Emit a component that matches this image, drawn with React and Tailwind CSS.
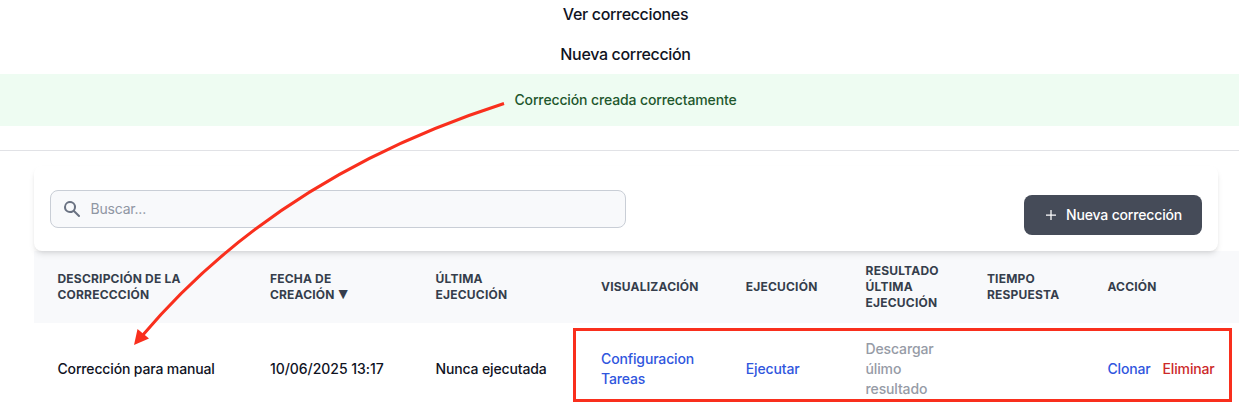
const columns = [
  { label: 'Descripción de la correccción', width: 'w-[212.4px]' },
  { label: 'Fecha de creación', width: 'w-[165.6px]', sorted: true },
  { label: 'Última ejecución', width: 'w-[165.5px]', narrow: true },
  { label: 'Visualización', width: 'w-[144.7px]' },
  { label: 'Ejecución', width: 'w-[119.8px]' },
  { label: 'Resultado última ejecución', width: 'w-[121.3px]' },
  { label: 'Tiempo respuesta', width: 'w-[120.5px]' },
  { label: 'Acción', width: 'w-[156px]' },
];

function SearchIcon() {
  return (
    <svg className="h-5 w-5 shrink-0 text-gray-500" viewBox="0 0 20 20" fill="currentColor">
      <path
        fillRule="evenodd"
        clipRule="evenodd"
        d="M8 4a4 4 0 100 8 4 4 0 000-8zM2 8a6 6 0 1110.89 3.476l4.817 4.817a1 1 0 01-1.414 1.414l-4.816-4.816A6 6 0 012 8z"
      />
    </svg>
  );
}

function Toolbar() {
  return (
    <div className="relative z-10 flex h-[85px] w-[1184px] items-start rounded-lg bg-white px-4 shadow-md">
      <div className="mt-[24px] flex h-[38px] w-[576px] items-center gap-[8.5px] rounded-lg border border-[#c9ced6] bg-[#f8f9fb] pl-[11px]">
        <SearchIcon />
        <span className="text-sm leading-5 tracking-[-0.2px] text-[#8f96a3]">Buscar...</span>
      </div>
      <button className="mt-[29px] ml-auto flex h-10 w-[178px] items-center rounded-lg bg-[#454b58] pl-[22px] text-sm font-medium tracking-[-0.16px] text-white">
        <svg className="mr-[10px] h-[10px] w-[10px]" viewBox="0 0 10 10" stroke="currentColor" strokeWidth="1.25">
          <path d="M5 0v10M0 5h10" />
        </svg>
        Nueva corrección
      </button>
    </div>
  );
}

function CorrectionsTable() {
  return (
    <table className="w-[1206px] table-fixed text-left text-sm font-medium tracking-[-0.15px]">
      <thead className="bg-[#f8f9fb] text-xs leading-4 text-[#353e4c] uppercase">
        <tr className="h-[72px]">
          {columns.map((column) => (
            <th
              key={column.label}
              className={`${column.width} ${column.narrow ? 'pr-12' : 'pr-4'} pl-[23.5px] align-middle font-bold tracking-[0.2px]`}
            >
              {column.label}
              {column.sorted && (
                <span className="ml-[3px] inline-block origin-left scale-x-[0.82] leading-3">▼</span>
              )}
            </th>
          ))}
        </tr>
      </thead>
      <tbody>
        <tr className="h-[92px] text-[#10131f]">
          <td className="pl-[23.5px]">Corrección para manual</td>
          <td className="pl-[23.5px] tracking-[-0.04px]">10/06/2025 13:17</td>
          <td className="pl-[23.5px]">Nunca ejecutada</td>
          <td className="pl-[23.5px] text-[#3056de]">
            <div>Configuracion</div>
            <div>Tareas</div>
          </td>
          <td className="pl-[23.5px] text-[#3056de]">Ejecutar</td>
          <td className="pr-5 pl-[23.5px] text-[#969ba6]">Descargar úlimo resultado</td>
          <td />
          <td className="pl-[23.5px] whitespace-nowrap">
            <span className="text-[#3056de]">Clonar</span>
            <span className="ml-3 text-[#cc2929]">Eliminar</span>
          </td>
        </tr>
      </tbody>
    </table>
  );
}

function Annotations() {
  return (
    <svg className="pointer-events-none absolute inset-0 z-20" width="1239" height="412" viewBox="0 0 1239 412" fill="none">
      <path d="M504 103.5Q277 176.5 142 336" stroke="#f92f1d" strokeWidth="3" />
      <path d="M134 345L137.5 329L149 338.5Z" fill="#f92f1d" />
      <rect x="574.5" y="329.5" width="656" height="71" stroke="#f92f1d" strokeWidth="3" />
    </svg>
  );
}

export default function App() {
  return (
    <div className="relative h-[412px] w-[1239px] overflow-hidden bg-white font-['Inter',sans-serif]">
      <nav className="flex h-[74px] flex-col items-center gap-4 pt-[2px] pl-[12px] text-base leading-6 font-medium tracking-[-0.33px] text-[#10131f]">
        <a>Ver correcciones</a>
        <a>Nueva corrección</a>
      </nav>
      <div className="flex h-[52px] items-center justify-center bg-[#eefcf2] pl-[12px] text-sm font-medium tracking-[-0.13px] text-[#1e572d]">
        Corrección creada correctamente
      </div>
      <main className="mt-6 border-t border-[#e1e2e6] pt-[15px] pl-[34px]">
        <Toolbar />
        <CorrectionsTable />
      </main>
      <Annotations />
    </div>
  );
}
